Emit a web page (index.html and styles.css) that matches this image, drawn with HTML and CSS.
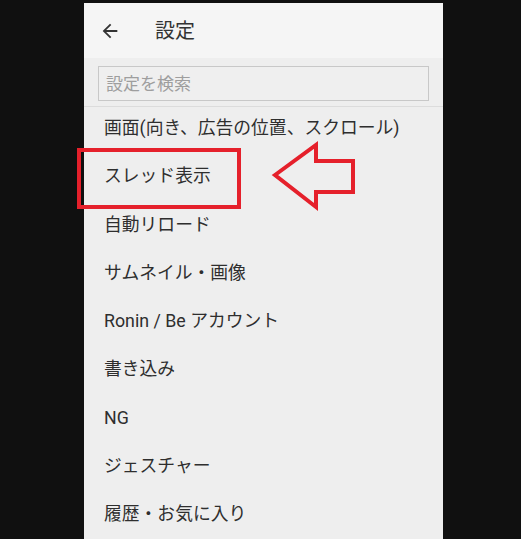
FILE: index.html
```html
<!DOCTYPE html>
<html lang="ja">
<head>
    <meta charset="UTF-8">
    <meta name="viewport" content="width=device-width, initial-scale=1.0">
    <title>設定</title>
    <link rel="stylesheet" href="styles.css">
</head>
<body>
    <div class="screen">
        <div class="toolbar">
            <svg class="back" viewBox="0 0 24 24" width="22" height="22">
                <path d="M20 11H7.83l5.59-5.59L12 4l-8 8 8 8 1.41-1.41L7.83 13H20v-2z" fill="#333"/>
            </svg>
            <span class="title">設定</span>
        </div>
        <div class="search">
            <input type="text" placeholder="設定を検索">
        </div>
        <ul class="menu">
            <li>画面(向き、広告の位置、スクロール)</li>
            <li>スレッド表示</li>
            <li>自動リロード</li>
            <li>サムネイル・画像</li>
            <li>Ronin / Be アカウント</li>
            <li>書き込み</li>
            <li>NG</li>
            <li>ジェスチャー</li>
            <li>履歴・お気に入り</li>
        </ul>
    </div>

    <!-- 注釈 -->
    <div class="mark-box"></div>
    <svg class="mark-arrow" width="90" height="72" viewBox="0 0 90 72">
        <polygon points="4,34 45,4 45,20 82,20 82,51 45,51 45,66" fill="none" stroke="#e5202b" stroke-width="4" stroke-linejoin="miter"/>
    </svg>
</body>
</html>
```

FILE: styles.css
```css
body {
    margin: 0;
    background-color: #101010;
    font-family: Roboto, "Noto Sans CJK JP", sans-serif;
    color: #333;
    position: relative;
    height: 539px;
    overflow: hidden;
}
.screen {
    margin: 3px 0 0 84px;
    width: 359px;
    height: 536px;
    background: #eeeeee;
    overflow: hidden;
}
.toolbar {
    height: 55px;
    display: flex;
    align-items: center;
    background: #f5f5f5;
}
.back {
    margin-left: 15px;
}
.title {
    margin-left: 34px;
    font-size: 20px;
    line-height: 1;
}
.search {
    height: 49px;
    padding: 8px 14px 0 14px;
    box-sizing: border-box;
    border-bottom: 1px solid #dcdcdc;
}
.search input {
    width: 100%;
    height: 35px;
    box-sizing: border-box;
    border: 1px solid #c8c8c8;
    background: #efefef;
    padding: 0 7px;
    font-family: inherit;
    font-size: 17px;
    outline: none;
}
.search input::placeholder {
    color: #9e9e9e;
}
.menu {
    list-style: none;
    margin: 0;
    padding: 0;
}
.menu li {
    height: 48.3px;
    line-height: 41px;
    padding-left: 20px;
    font-size: 17.8px;
    color: #2e2e2e;
    white-space: nowrap;
}
.mark-box {
    position: absolute;
    left: 77px;
    top: 148px;
    width: 156px;
    height: 53px;
    border: 4px solid #e5202b;
}
.mark-arrow {
    position: absolute;
    left: 271px;
    top: 141px;
}
```
